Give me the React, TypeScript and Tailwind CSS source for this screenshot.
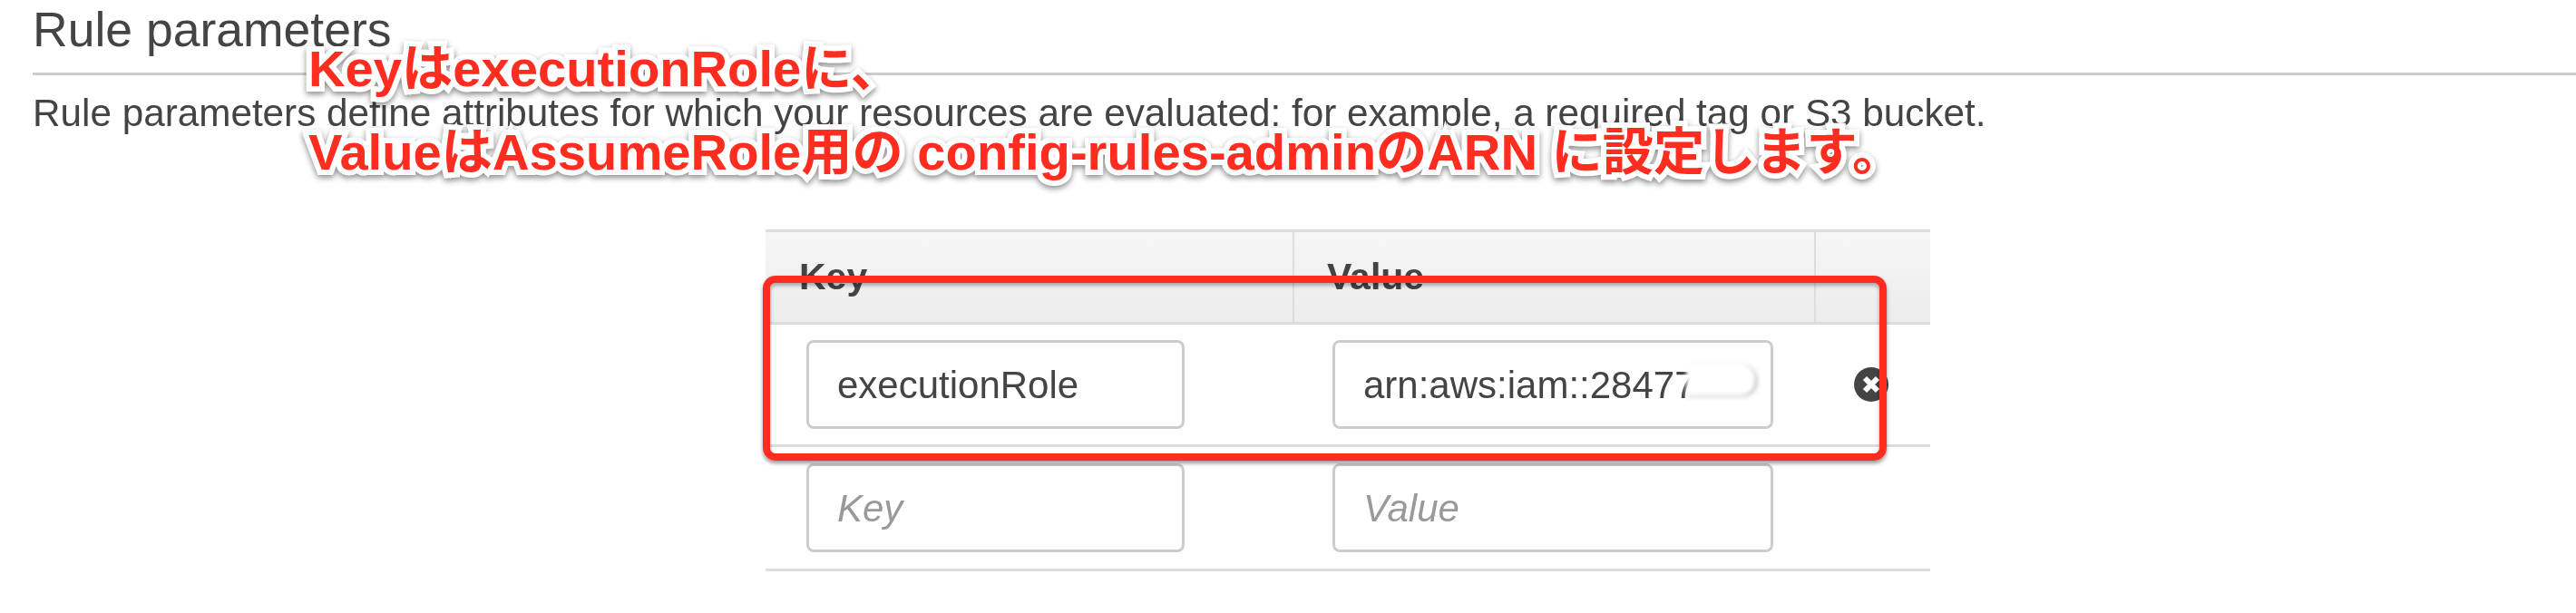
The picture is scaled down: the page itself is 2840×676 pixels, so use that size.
const sans = 'font-["Liberation_Sans","Noto_Sans_CJK_JP",sans-serif]';

function Field({ text, placeholder, width, children }: { text: string; placeholder?: boolean; width: string; children?: React.ReactNode }) {
  return (
    <div className={`relative flex h-[98px] items-center rounded-lg border-[3px] border-[#ccc] bg-white pl-[31px] text-[42px] whitespace-nowrap ${width}`}>
      <span className={placeholder ? 'italic text-[#999]' : 'text-[#444]'}>{text}</span>
      {children}
    </div>
  );
}

function Annotation({ children, className }: { children: React.ReactNode; className: string }) {
  return (
    <div className={`absolute left-[340px] whitespace-nowrap text-[56.2px] leading-none font-bold text-[#ff2d20] [-webkit-text-stroke:12px_white] [paint-order:stroke_fill] drop-shadow-[0_3px_3px_rgba(0,0,0,0.45)] ${className}`}>
      {children}
    </div>
  );
}

export default function App() {
  return (
    <div className={`relative h-[676px] w-[2840px] overflow-hidden bg-white text-[#444] blur-[0.7px] ${sans}`}>
      <div className="pl-[36px]">
        <div className="flex h-[83px] items-center border-b-[3px] border-[#ccc] pb-[14px] text-[53.5px] whitespace-nowrap">
          Rule parameters
        </div>
        <div className="flex h-[84px] items-center text-[42.25px] whitespace-nowrap">
          Rule parameters define attributes for which your resources are evaluated: for example, a required tag or S3 bucket.
        </div>
      </div>

      <div className="ml-[844px] mt-[86px] w-[1284px]">
        <div className="flex h-[105px] border-y-[3px] border-[#ddd] bg-gradient-to-b from-[#f6f6f6] to-[#ececec] text-[41px] font-bold">
          <div className="flex w-[583px] items-center border-r-2 border-[#ddd] pl-[37px]">Key</div>
          <div className="flex w-[575px] items-center border-r-2 border-[#ddd] pl-[36px]">Value</div>
        </div>
        <div className="flex h-[135px] items-center border-b-[3px] border-[#ddd]">
          <div className="w-[583px] pl-[45px]"><Field text="executionRole" width="w-[417px]" /></div>
          <div className="w-[575px] pl-[42px]">
            <Field text="arn:aws:iam::28477" width="w-[486px]">
              {/* blurred out account id */}
              <div className="absolute left-[387px] top-[24px] h-[34px] w-[76px] rounded-r-2xl bg-white shadow-[2px_1px_3px_rgba(0,0,0,0.35)] blur-[2px]" />
            </Field>
          </div>
          <svg viewBox="0 0 40 38" className="ml-[41px] h-[38px] w-[40px]">
            <circle cx="20" cy="19" r="19" fill="#444" />
            <path d="M13 12 L27 26 M27 12 L13 26" stroke="#fff" strokeWidth="6" />
          </svg>
        </div>
        <div className="flex h-[137px] items-center border-b-[3px] border-[#ddd]">
          <div className="w-[583px] pl-[45px]"><Field text="Key" placeholder width="w-[417px]" /></div>
          <div className="w-[575px] pl-[42px]"><Field text="Value" placeholder width="w-[486px]" /></div>
        </div>
      </div>

      {/* highlight box and callout drawn over the screenshot */}
      <div className="absolute left-[841px] top-[304px] h-[204px] w-[1239px] rounded-[14px] border-[8px] border-[#ff2d20] shadow-[0_3px_4px_rgba(0,0,0,0.4),inset_0_3px_4px_rgba(0,0,0,0.3)]" />
      <Annotation className="top-[48px]">KeyはexecutionRoleに、</Annotation>
      <Annotation className="top-[140px]">ValueはAssumeRole用の config-rules-adminのARN に設定します。</Annotation>
    </div>
  );
}
